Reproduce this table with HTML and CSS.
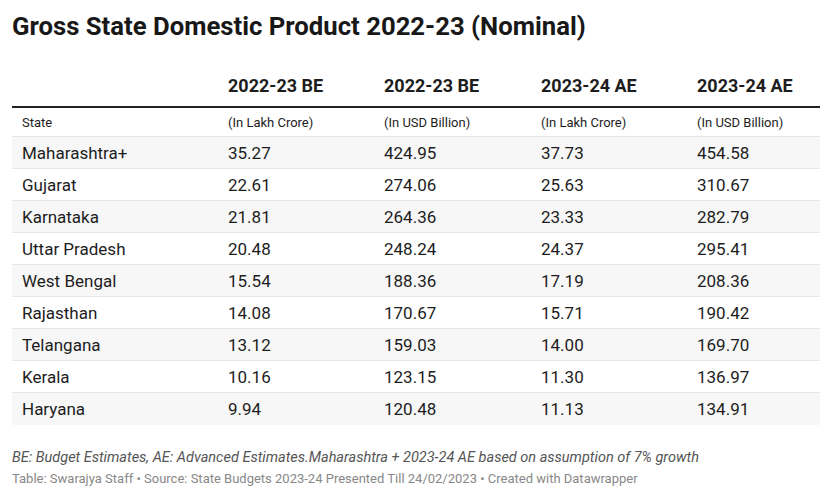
FILE: index.html
```html
<!DOCTYPE html>
<html>
<head>
<meta charset="utf-8">
<link rel="stylesheet" href="styles.css">
</head>
<body>
<div class="chart">
  <h1 class="title">Gross State Domestic Product 2022-23 (Nominal)</h1>
  <table class="data">
    <colgroup>
      <col class="c1"><col class="c2"><col class="c3"><col class="c4"><col class="c5">
    </colgroup>
    <thead>
      <tr class="head">
        <th></th><th>2022-23 BE</th><th>2022-23 BE</th><th>2023-24 AE</th><th>2023-24 AE</th>
      </tr>
      <tr class="sub">
        <td>State</td><td>(In Lakh Crore)</td><td>(In USD Billion)</td><td>(In Lakh Crore)</td><td>(In USD Billion)</td>
      </tr>
    </thead>
    <tbody>
      <tr><td>Maharashtra+</td><td>35.27</td><td>424.95</td><td>37.73</td><td>454.58</td></tr>
      <tr><td>Gujarat</td><td>22.61</td><td>274.06</td><td>25.63</td><td>310.67</td></tr>
      <tr><td>Karnataka</td><td>21.81</td><td>264.36</td><td>23.33</td><td>282.79</td></tr>
      <tr><td>Uttar Pradesh</td><td>20.48</td><td>248.24</td><td>24.37</td><td>295.41</td></tr>
      <tr><td>West Bengal</td><td>15.54</td><td>188.36</td><td>17.19</td><td>208.36</td></tr>
      <tr><td>Rajasthan</td><td>14.08</td><td>170.67</td><td>15.71</td><td>190.42</td></tr>
      <tr><td>Telangana</td><td>13.12</td><td>159.03</td><td>14.00</td><td>169.70</td></tr>
      <tr><td>Kerala</td><td>10.16</td><td>123.15</td><td>11.30</td><td>136.97</td></tr>
      <tr><td>Haryana</td><td>9.94</td><td>120.48</td><td>11.13</td><td>134.91</td></tr>
    </tbody>
  </table>
  <p class="notes">BE: Budget Estimates, AE: Advanced Estimates.Maharashtra + 2023-24 AE based on assumption of 7% growth</p>
  <p class="source">Table: Swarajya Staff • Source: State Budgets 2023-24 Presented Till 24/02/2023 • Created with Datawrapper</p>
</div>
</body>
</html>
```

FILE: styles.css
```css
html, body {
  margin: 0;
  padding: 0;
  background: #ffffff;
}
body {
  font-family: Roboto, "Liberation Sans", sans-serif;
  color: #1d1d1d;
}
.chart {
  padding: 12px 12px 0 12px;
}
.title {
  margin: 0;
  font-size: 25.7px;
  line-height: 28px;
  font-weight: 700;
  color: #181818;
}
.data {
  margin-top: 35px;
  width: 808px;
  border-collapse: separate;
  border-spacing: 0;
  table-layout: fixed;
}
.c1 { width: 206px; }
.c2 { width: 156px; }
.c3 { width: 157px; }
.c4 { width: 156px; }
.c5 { width: 133px; }
.data th, .data td {
  text-align: left;
  padding: 0 0 0 10px;
  white-space: nowrap;
  vertical-align: top;
}
.data .head th {
  font-size: 18px;
  font-weight: 700;
  line-height: 22px;
  padding-bottom: 9px;
  border-bottom: 2px solid #222;
}
.data .sub td {
  font-size: 13px;
  line-height: 16px;
  padding-top: 7px;
  padding-bottom: 5px;
  border-bottom: 1px solid #e4e4e4;
}
.data tbody td {
  font-size: 17px;
  line-height: 20px;
  padding-top: 6px;
  padding-bottom: 5px;
  border-bottom: 1px solid #e6e6e6;
}
.data tbody tr:nth-child(odd) td {
  background: #f7f7f7;
}
.data tbody tr:last-child td {
  border-bottom: none;
  padding-bottom: 6px;
}
.notes {
  margin: 24px 0 0 0;
  font-size: 14.5px;
  line-height: 18px;
  font-style: italic;
  color: #555;
}
.source {
  margin: 4px 0 0 0;
  font-size: 13px;
  line-height: 16px;
  color: #888;
}
```
